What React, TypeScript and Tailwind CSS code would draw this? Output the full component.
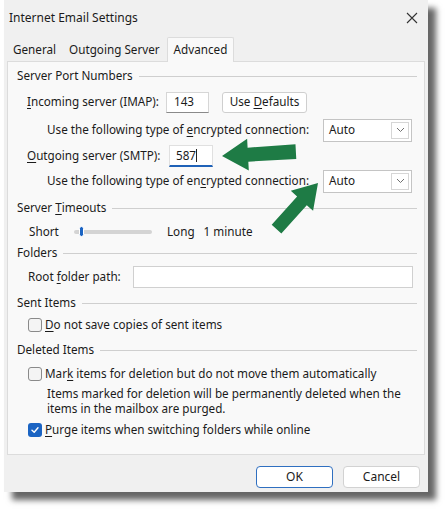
import React from "react";

const U = ({ children }: { children: React.ReactNode }) => <span className="underline underline-offset-2">{children}</span>;

const GroupHeader = ({ children, className = "" }: { children: React.ReactNode; className?: string }) => (
  <div className={`flex items-center h-[20px] pl-[9px] pr-[7px] ${className}`}>
    <span>{children}</span>
    <div className="flex-1 h-px bg-[#cfcfcf] ml-[6px]" />
  </div>
);

const Checkbox = ({ checked = false }: { checked?: boolean }) =>
  checked ? (
    <div className="w-[14px] h-[14px] rounded-[3px] bg-[#1b64c3] flex items-center justify-center">
      <svg width="10" height="10" viewBox="0 0 10 10">
        <path d="M2 5.2 L4.2 7.2 L8 2.8" fill="none" stroke="white" strokeWidth="1.4" strokeLinecap="round" strokeLinejoin="round" />
      </svg>
    </div>
  ) : (
    <div className="w-[14px] h-[14px] rounded-[3px] border border-[#8a8a8a] bg-[#f4f4f4]" />
  );

const Select = () => (
  <div className="w-[89px] h-[23px] bg-white border border-[#c4c4c4] flex items-center justify-between pl-[5px] pr-[2px]">
    <span>Auto</span>
    <div className="w-[18px] h-[17px] border border-[#d6d6d6] flex items-center justify-center">
      <svg width="9" height="6" viewBox="0 0 9 6">
        <path d="M1 1 L4.5 4.5 L8 1" fill="none" stroke="#707070" strokeWidth="1" />
      </svg>
    </div>
  </div>
);

export default function App() {
  return (
    <div className="w-[445px] h-[514px] bg-white relative overflow-hidden font-['Noto_Sans',sans-serif] text-[11.7px] text-[#1b1b1b]">
      <div className="ml-[4px] w-[424px] h-[492px] bg-[#f0f0f0] shadow-[8px_8px_6px_rgba(0,0,0,0.6)] flex flex-col">
        {/* title bar */}
        <div className="h-[36px] flex items-center justify-between pl-[5px] pr-[10px]">
          <span className="text-[12px]">Internet Email Settings</span>
          <svg width="12" height="12" viewBox="0 0 12 12">
            <path d="M1 1 L11 11 M11 1 L1 11" stroke="#333" strokeWidth="1.1" />
          </svg>
        </div>

        {/* tabs */}
        <div className="h-[25px] flex items-end pl-[3px]">
          <div className="h-[22px] px-[6px] flex items-center">General</div>
          <div className="h-[22px] px-[7px] flex items-center">Outgoing Server</div>
          <div className="h-[25px] px-[6px] flex items-center bg-[#f9f9f9] border border-b-0 border-[#dcdcdc] rounded-t-[2px] -mb-px relative z-10">
            Advanced
          </div>
        </div>

        {/* panel */}
        <div className="mx-[3px] h-[394px] bg-[#f9f9f9] border border-[#dcdcdc] flex flex-col">
          <GroupHeader className="mt-[4px]">Server Port Numbers</GroupHeader>

          <div className="flex items-center h-[22px] mt-[5px] pl-[19px]">
            <span className="w-[139px]"><U>I</U>ncoming server (IMAP):</span>
            <div className="w-[43px] h-[21px] bg-white border border-[#d6d6d6] border-b-[#8a8a8a] flex items-center pl-[7px]">143</div>
            <div className="ml-[13px] w-[85px] h-[21px] bg-white border border-[#cfcfcf] rounded-[3px] flex items-center justify-center">
              <span>Use <U>D</U>efaults</span>
            </div>
          </div>

          <div className="flex items-center h-[24px] mt-[5px] pl-[39px]">
            <span className="w-[276px]">Use the following type of <U>e</U>ncrypted connection:</span>
            <Select />
          </div>

          <div className="flex items-center h-[22px] mt-[3px] pl-[19px]">
            <span className="w-[142px]"><U>O</U>utgoing server (SMTP):</span>
            <div className="w-[44px] h-[22px] bg-white border border-[#e0e0e0] border-b-2 border-b-[#1f62b8] flex items-center pl-[6px]">
              587<span className="w-px h-[13px] bg-[#222]" />
            </div>
          </div>

          <div className="flex items-center h-[22px] mt-[3px] pl-[39px]">
            <span className="w-[276px]">Use the following type of en<U>c</U>rypted connection:</span>
            <Select />
          </div>

          <GroupHeader className="mt-[6px]">Server <U>T</U>imeouts</GroupHeader>

          <div className="flex items-center h-[20px] mt-[4px] pl-[21px]">
            <span className="w-[45px]">Short</span>
            <div className="w-[78px] h-[4px] rounded-full bg-[#d4d4d4] relative">
              <div className="absolute left-[5px] top-[-4px] w-[5px] h-[11px] rounded-full bg-[#1b64c3] border border-white" />
            </div>
            <span className="ml-[15px]">Long</span>
            <span className="ml-[9px]">1 minute</span>
          </div>

          <GroupHeader className="mt-[1px]">Folders</GroupHeader>

          <div className="flex items-center h-[22px] mt-[3px] pl-[20px]">
            <span className="w-[105px]">Root <U>f</U>older path:</span>
            <div className="w-[280px] h-[22px] bg-white border border-[#d0d0d0]" />
          </div>

          <GroupHeader className="mt-[5px]">Sent Items</GroupHeader>

          <div className="flex items-center h-[20px] mt-[2px] pl-[20px] gap-[3px]">
            <Checkbox />
            <span><U>D</U>o not save copies of sent items</span>
          </div>

          <GroupHeader className="mt-[5px]">Deleted Items</GroupHeader>

          <div className="flex items-center h-[20px] mt-[4px] pl-[20px] gap-[3px]">
            <Checkbox />
            <span>Mar<U>k</U> items for deletion but do not move them automatically</span>
          </div>

          <div className="mt-[2px] pl-[39px] pr-[10px] leading-[15px]">
            Items marked for deletion will be permanently deleted when the
            <br />
            items in the mailbox are purged.
          </div>

          <div className="flex items-center h-[20px] mt-[4px] pl-[20px] gap-[3px]">
            <Checkbox checked />
            <span><U>P</U>urge items when switching folders while online</span>
          </div>
        </div>

        {/* buttons */}
        <div className="flex justify-end gap-[10px] pr-[8px] mt-[11px]">
          <div className="w-[77px] h-[22px] bg-white border border-[#2f6fc0] rounded-[4px] flex items-center justify-center text-[12px]">OK</div>
          <div className="w-[77px] h-[22px] bg-white border border-[#d2d2d2] rounded-[4px] flex items-center justify-center text-[12px]">Cancel</div>
        </div>
      </div>

      {/* green annotation arrows */}
      <svg className="absolute left-0 top-0 pointer-events-none" width="445" height="514">
        <polygon
          points="0,0 26,-16 26,-7 74,-8 74,7 26,7 26,16"
          transform="translate(222 156) rotate(-3)"
          fill="#1e7b45"
        />
        <polygon
          points="0,0 -24,-15 -24,-6.5 -62,-6.5 -62,6.5 -24,6.5 -24,15"
          transform="translate(318 183) rotate(-48)"
          fill="#1e7b45"
        />
      </svg>
    </div>
  );
}
